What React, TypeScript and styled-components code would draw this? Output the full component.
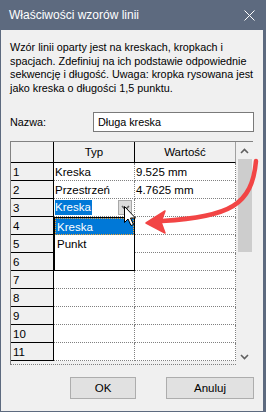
import React from "react";
import styled, { createGlobalStyle } from "styled-components";

const Global = createGlobalStyle`
  html, body { margin: 0; padding: 0; background: #f0f0f0; }
  #root { width: 266px; height: 412px; }
`;

const UI = `"Liberation Sans", Arial, sans-serif`;
const FRAME = "#5d6a7f";

const Window = styled.div`
  position: relative;
  box-sizing: border-box;
  width: 266px;
  height: 412px;
  background: #f0f0f0;
  border-left: 1px solid ${FRAME};
  border-right: 3px solid ${FRAME};
  border-bottom: 1px solid ${FRAME};
  display: flex;
  flex-direction: column;
  font-family: ${UI};
  font-size: 10.8px;
  color: #000;
`;

const TitleBar = styled.div`
  height: 30px;
  flex: none;
  background: ${FRAME};
  display: flex;
  align-items: center;
  justify-content: space-between;
  padding: 0 8px;
  color: #fff;
  font-size: 12px;
`;

const Body = styled.div`
  display: flex;
  flex-direction: column;
  padding: 11px 9px 0 9px;
`;

const Description = styled.p`
  margin: 0;
  line-height: 13.5px;
  height: 54px;
`;

const NameRow = styled.div`
  margin-top: 17px;
  display: flex;
  align-items: center;
`;

const Label = styled.label`
  width: 83px;
  flex: none;
`;

const TextInput = styled.div`
  flex: 1;
  box-sizing: border-box;
  height: 20px;
  border: 1px solid #7a7a7a;
  background: #fff;
  padding-left: 4px;
  display: flex;
  align-items: center;
`;

const GridBox = styled.div`
  position: relative;
  margin-top: 9px;
  box-sizing: border-box;
  width: 243px;
  height: 224px;
  display: flex;
  border-top: 1px solid #828282;
  border-left: 1px solid #828282;
  background: #f0f0f0;
  font-size: 11.5px;
`;

const TableArea = styled.div`
  width: 225px;
  border-bottom: 1px dotted #808080;
  box-sizing: border-box;
`;

const Table = styled.div`
  display: grid;
  grid-template-columns: 43px 81px 101px;
  grid-template-rows: 21px repeat(11, 18px);
`;

const Cell = styled.div`
  box-sizing: border-box;
  display: flex;
  align-items: center;
  position: relative;
  white-space: nowrap;
`;

const HeadCell = styled(Cell)<{ $last?: boolean }>`
  background: #f0f0f0;
  justify-content: center;
  border-bottom: 1px solid #000;
  border-right: 1px solid ${(p) => (p.$last ? "#a0a0a0" : "#000")};
`;

const RowHead = styled(Cell)`
  background: #f0f0f0;
  padding-left: 2px;
  border-bottom: 1px solid #000;
  border-right: 1px solid #000;
`;

const DataCell = styled(Cell)`
  background: #fff;
  padding-left: 1px;
  border-bottom: 1px dotted #808080;
  border-right: 1px dotted #808080;
`;

const EditCell = styled(DataCell)`
  justify-content: space-between;
  padding-right: 2px;
`;

const Selected = styled.span`
  background: #0078d7;
  color: #fff;
  padding: 0 1px 1px 0;
  line-height: 14px;
`;

const DropButton = styled.div`
  box-sizing: border-box;
  width: 14px;
  height: 15px;
  background: #dcdcdc;
  border: 1px solid #a8a8a8;
  display: flex;
  align-items: center;
  justify-content: center;
`;

const Scrollbar = styled.div`
  width: 17px;
  display: flex;
  flex-direction: column;
  background: #f0f0f0;
`;

const ScrollButton = styled.div`
  height: 17px;
  flex: none;
  display: flex;
  align-items: center;
  justify-content: center;
`;

const Track = styled.div`
  flex: 1;
  padding: 0 1px 0 2px;
`;

const Thumb = styled.div`
  height: 93px;
  background: #cdcdcd;
`;

const DropList = styled.div`
  position: absolute;
  left: 43px;
  top: 75px;
  box-sizing: border-box;
  width: 81px;
  height: 54px;
  background: #fff;
  border: 1px solid #000;
  z-index: 2;
`;

const DropItem = styled.div<{ $active?: boolean }>`
  box-sizing: border-box;
  height: 17px;
  padding-left: 1px;
  display: flex;
  align-items: center;
  background: ${(p) => (p.$active ? "#0078d7" : "transparent")};
  color: ${(p) => (p.$active ? "#fff" : "#000")};
  border: 1px dotted ${(p) => (p.$active ? "#f0a030" : "transparent")};
`;

const ButtonRow = styled.div`
  margin-top: 12px;
  display: flex;
  justify-content: flex-end;
  gap: 30px;
`;

const Button = styled.div<{ $w: number }>`
  box-sizing: border-box;
  width: ${(p) => p.$w}px;
  height: 22px;
  background: #e1e1e1;
  border: 1px solid #adadad;
  display: flex;
  align-items: center;
  justify-content: center;
  font-size: 11.5px;
`;

const Overlay = styled.svg`
  position: absolute;
  left: -1px;
  top: 0;
  width: 266px;
  height: 412px;
  pointer-events: none;
  z-index: 5;
`;

const Chevron = ({ up }: { up?: boolean }) => (
  <svg width="9" height="6" viewBox="0 0 9 6">
    <path
      d={up ? "M1 5 L4.5 1.5 L8 5" : "M1 1 L4.5 4.5 L8 1"}
      fill="none"
      stroke="#606060"
      strokeWidth="1.6"
    />
  </svg>
);

const rows: [string, string][] = [
  ["Kreska", "9.525 mm"],
  ["Przestrzeń", "4.7625 mm"],
];

export default function App() {
  return (
    <Window>
      <Global />
      <TitleBar>
        <span>Właściwości wzorów linii</span>
        <svg width="11" height="11" viewBox="0 0 11 11">
          <path d="M0.5 0.5 L10.5 10.5 M10.5 0.5 L0.5 10.5" stroke="#fff" strokeWidth="1" />
        </svg>
      </TitleBar>
      <Body>
        <Description>
          Wzór linii oparty jest na kreskach, kropkach i spacjach. Zdefiniuj na ich podstawie odpowiednie
          sekwencję i długość. Uwaga: kropka rysowana jest jako kreska o długości 1,5 punktu.
        </Description>
        <NameRow>
          <Label>Nazwa:</Label>
          <TextInput>Długa kreska</TextInput>
        </NameRow>
        <GridBox>
          <TableArea>
            <Table>
              <HeadCell />
              <HeadCell>Typ</HeadCell>
              <HeadCell $last>Wartość</HeadCell>
              {Array.from({ length: 11 }, (_, i) => {
                const n = i + 1;
                const data = rows[i];
                return (
                  <React.Fragment key={n}>
                    <RowHead>{n}</RowHead>
                    {n === 3 ? (
                      <EditCell>
                        <Selected>Kreska</Selected>
                        <DropButton>
                          <Chevron />
                        </DropButton>
                      </EditCell>
                    ) : (
                      <DataCell>{data ? data[0] : ""}</DataCell>
                    )}
                    <DataCell>{data ? data[1] : ""}</DataCell>
                  </React.Fragment>
                );
              })}
            </Table>
          </TableArea>
          <Scrollbar>
            <ScrollButton>
              <Chevron up />
            </ScrollButton>
            <Track>
              <Thumb />
            </Track>
            <ScrollButton>
              <Chevron />
            </ScrollButton>
          </Scrollbar>
          <DropList>
            <DropItem $active>Kreska</DropItem>
            <DropItem>Punkt</DropItem>
          </DropList>
        </GridBox>
        <ButtonRow>
          <Button $w={66}>OK</Button>
          <Button $w={88}>Anuluj</Button>
        </ButtonRow>
      </Body>
      <Overlay viewBox="0 0 266 412">
        <path
          d="M256 161 C252 205 230 217 162 221"
          fill="none"
          stroke="#f24545"
          strokeWidth="4.5"
          strokeLinecap="round"
        />
        <path d="M146 223 L165 211 L161 222 L165 233 Z" fill="#f24545" stroke="#f24545" strokeWidth="1.5" strokeLinejoin="round" />
        <path
          d="M124.5 206.5 L124.5 222.5 L128 219 L131 225.5 L133.5 224.5 L130.5 218 L135.5 218 Z"
          fill="#fff"
          stroke="#000"
          strokeWidth="1"
          strokeLinejoin="miter"
        />
      </Overlay>
    </Window>
  );
}
